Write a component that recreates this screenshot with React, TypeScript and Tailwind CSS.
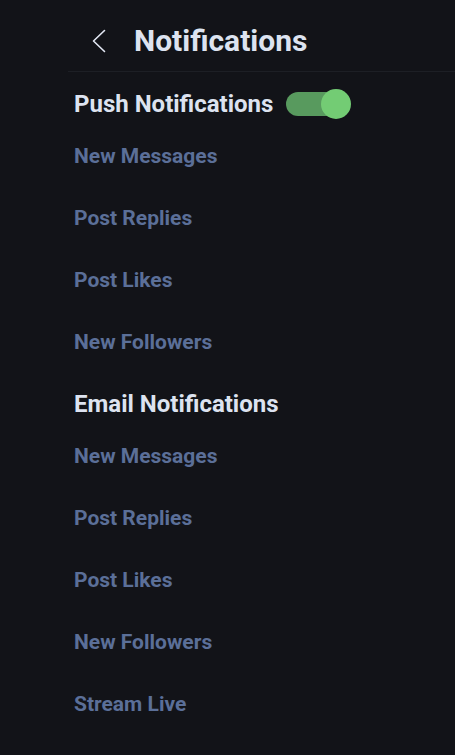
const pushItems = ['New Messages', 'Post Replies', 'Post Likes', 'New Followers'];
const emailItems = ['New Messages', 'Post Replies', 'Post Likes', 'New Followers', 'Stream Live'];

export default function App() {
  return (
    <div className="min-h-[755px] w-[455px] bg-[#121318] pl-[68px]" style={{ fontFamily: 'Roboto, "Liberation Sans", sans-serif' }}>
      {/* Header */}
      <div className="flex h-[72px] items-center border-b border-[#1d1f25] pl-[24px] pt-[10px]">
        <svg width="14" height="24" viewBox="0 0 14 24" fill="none" className="text-[#e3e8f4]">
          <polyline points="12.5,1.5 1.5,12 12.5,22.5" stroke="currentColor" strokeWidth="1.6" strokeLinecap="round" strokeLinejoin="round" />
        </svg>
        <h1 className="ml-[28px] text-[30px] font-bold text-[#dde3f0]">Notifications</h1>
      </div>

      <div className="pl-[6px]">
        {/* Push */}
        <div className="flex h-[52px] items-center gap-[13px] pt-[12px]">
          <h2 className="text-[24px] font-bold text-[#dde3f0]">Push Notifications</h2>
          <div className="relative h-[24px] w-[58px] rounded-full bg-[#589a5e]">
            <div className="absolute -top-[3px] right-[-7px] h-[30px] w-[30px] rounded-full bg-[#73cc74]" />
          </div>
        </div>
        {pushItems.map(item => (
          <div key={'p' + item} className="flex h-[62px] items-center pt-[3px] text-[21px] font-bold text-[#5b6f98]">
            {item}
          </div>
        ))}

        {/* Email */}
        <div className="flex h-[52px] items-center pt-[12px]">
          <h2 className="text-[24px] font-bold text-[#dde3f0]">Email Notifications</h2>
        </div>
        {emailItems.map(item => (
          <div key={'e' + item} className="flex h-[62px] items-center pt-[3px] text-[21px] font-bold text-[#5b6f98]">
            {item}
          </div>
        ))}
      </div>
    </div>
  );
}
